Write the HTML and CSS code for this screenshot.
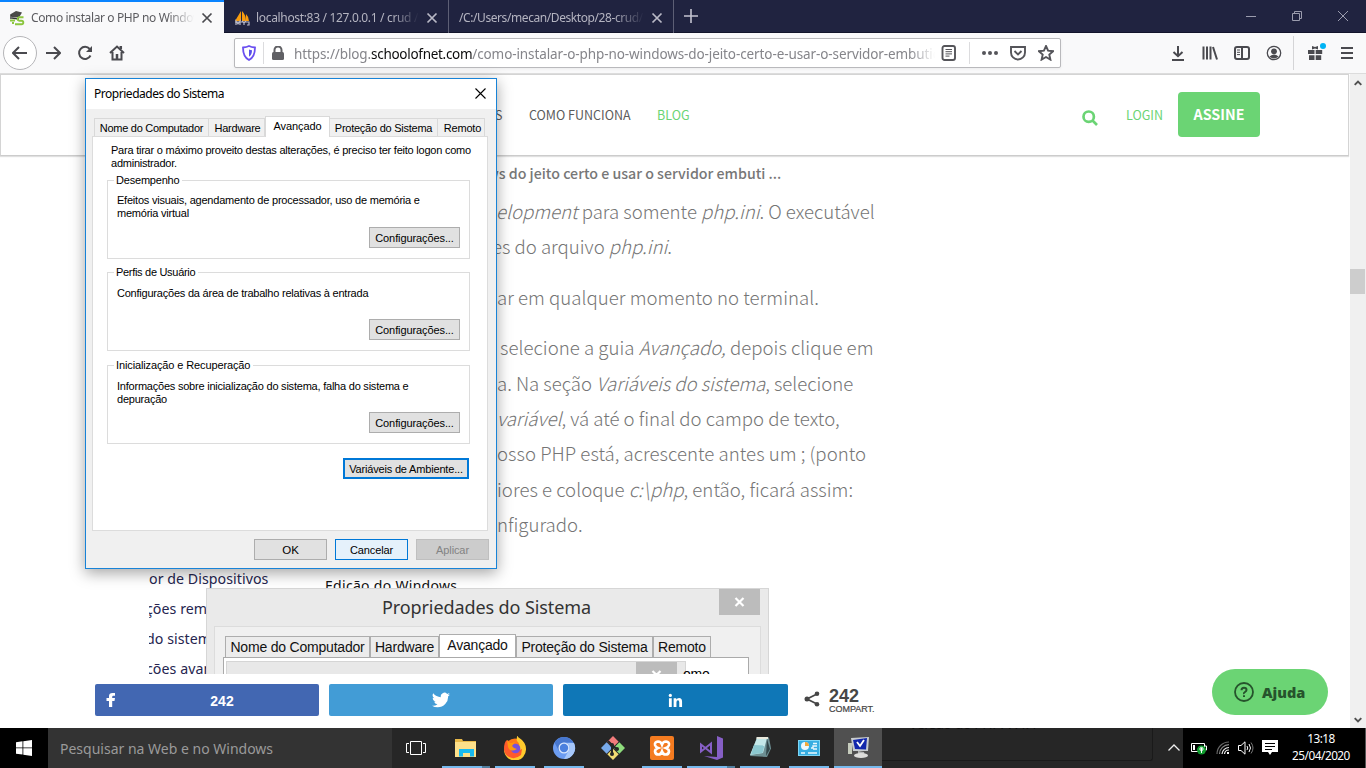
FILE: index.html
```html
<!DOCTYPE html>
<html lang="pt-BR">
<head>
<meta charset="utf-8">
<title>Como instalar o PHP no Windows</title>
<link rel="stylesheet" href="styles.css">
</head>
<body>
<div class="desktop">

<header class="tabs">
  <div class="tab tab-active">
    <svg class="fav" viewBox="0 0 16 16"><path d="M1 4.500 7 1l6 1.500-3 5-7-.5z" fill="#4a4a48"/><path d="M2 5v4M3 8l7 1" stroke="#333" stroke-width="1.400"/><path d="M14.500 7.200H10a1.800 1.800 0 0 0 0 3.500h2.500a1.800 1.800 0 0 1 0 3.600H6M1 10.500h5M3 13h2" fill="none" stroke="#8cc63f" stroke-width="1.900"/></svg>
    <span class="tab-text t1">Como instalar o PHP no Windows</span>
    <svg class="tab-x" viewBox="0 0 12 12"><path d="m1.500 1.500 9 9m0-9-9 9"/></svg>
  </div>
  <div class="tab">
    <svg class="fav" viewBox="0 0 16 16"><path d="M1 11 7 1v10zM8 11V1q4 4 4 10zM12 11V4q3 3 3 7z" fill="#f89c0e"/><path d="M1 12h14M2 15v-4l2 3 2-3v4m2-4 2 2 2-2m-2 2v2m3 0h2v-3h-2" fill="none" stroke="#b9b9c9" stroke-width="1.200"/></svg>
    <span class="tab-text t2">localhost:83 / 127.0.0.1 / crud / c</span>
    <svg class="tab-x" viewBox="0 0 12 12"><path d="m1.500 1.500 9 9m0-9-9 9"/></svg>
  </div>
  <div class="tab tab3">
    <span class="tab-text t3">/C:/Users/mecan/Desktop/28-crud/i</span>
    <svg class="tab-x" viewBox="0 0 12 12"><path d="m1.500 1.500 9 9m0-9-9 9"/></svg>
  </div>
  <svg class="newtab" viewBox="0 0 14 14"><path d="M7 0v14M0 7h14"/></svg>
  <div class="winctl">
    <svg viewBox="0 0 10 10"><path d="M0 5.500h10"/></svg>
    <svg viewBox="0 0 10 10"><path d="M.5 2.500h7v7h-7zM2.500 2.500v-2h7v7h-2"/></svg>
    <svg viewBox="0 0 10 10"><path d="m0 0 10 10M10 0 0 10"/></svg>
  </div>
</header>

<nav class="toolbar">
  <span class="back"><svg viewBox="0 0 16 16"><path d="M15 8H1m6-6L1 8l6 6"/></svg></span>
  <svg class="ti fwd" viewBox="0 0 16 16"><path d="M1 8h14M9 2l6 6-6 6"/></svg>
  <svg class="ti rel" viewBox="0 0 16 16"><path d="M13.500 10.500A6 6 0 1 1 12.700 4"/><path d="M15 1v6H9z" fill="#4a4a4f" stroke="none"/></svg>
  <svg class="ti home" viewBox="0 0 16 16"><path d="m1 8 7-6.500L15 8M3.500 7v7.500h9V7"/><path d="M8 9v5M11.800 1v3" stroke-width="2.500"/></svg>
  <div class="urlbar">
    <svg class="shield" viewBox="0 0 14 16"><path d="M7 1c2 1 4 1.300 6 1.500 0 6-1 10-6 12.500C2 12.500 1 8.500 1 2.500 3 2.300 5 2 7 1z" fill="#fff" stroke="#6a4ff0" stroke-width="1.800"/><path d="M7 4.500c1 .4 2 .6 3 .7 0 3-.7 5-3 6.500z" fill="#5a50ea"/></svg>
    <span class="usep"></span>
    <svg class="lock" viewBox="0 0 12 14"><rect x="0" y="6" width="12" height="8" rx="1.500" fill="#606064"/><path d="M2.500 7V4a3.500 3.500 0 0 1 7 0v3" fill="none" stroke="#606064" stroke-width="2"/></svg>
    <span class="url">https://blog.<b>schoolofnet.com</b>/como-instalar-o-php-no-windows-do-jeito-certo-e-usar-o-servidor-embutido</span>
    <svg class="ui reader" viewBox="0 0 16 16"><rect x="1.500" y="1" width="12.500" height="14" rx="2"/><path d="M4.500 4.500h6.500M4.500 6.700h6.500M4.500 8.900h6.500M4.500 11.100h4" stroke-width="1"/></svg>
    <span class="usep usep2"></span>
    <svg class="ui dots" viewBox="0 0 16 16"><g fill="#55555a" stroke="none"><circle cx="2" cy="8" r="2"/><circle cx="8" cy="8" r="2"/><circle cx="14" cy="8" r="2"/></g></svg>
    <svg class="ui pocket" viewBox="0 0 16 16"><path d="M1 2h14v5.500a7 7 0 0 1-14 0z"/><path d="M4.500 6 8 9.500 11.500 6"/></svg>
    <svg class="ui star" viewBox="0 0 16 16"><path d="m8 1 2.100 4.700 5 .5-3.800 3.400 1.100 5L8 12l-4.400 2.600 1.100-5L.9 6.200l5-.5z"/></svg>
  </div>
  <svg class="ti dl" viewBox="0 0 16 16"><path d="M8 1v10M3.500 7 8 11.200 12.500 7M2 15h12"/></svg>
  <svg class="ti lib" viewBox="0 0 16 16"><path d="M1.500 1.500v13M5 1.500v13M8.500 1.500v13M11 2l4 12.500"/></svg>
  <svg class="ti side" viewBox="0 0 16 16"><rect x="1" y="2" width="14" height="12" rx="2"/><path d="M8 2v12"/><path d="M3 5h3M3 7.300h3M3 9.600h3" stroke-width="1"/></svg>
  <svg class="ti acc" viewBox="0 0 16 16"><circle cx="8" cy="8" r="6.700" stroke-width="1.300"/><circle cx="8" cy="6.300" r="2.900" fill="#4a4a4f" stroke="none"/><path d="M3.500 11.500Q8 7.500 12.500 11.500 8 15.500 3.500 11.500z" fill="#4a4a4f" stroke="none"/></svg>
  <span class="tsep"></span>
  <svg class="gift" viewBox="0 0 20 18"><path d="M1 7h6.500v4H1zM8.700 7h6.500v4H8.700zM2 12.200h5.500V17H2zM8.700 12.200h5.500V17H8.700zM5 3l3 1L11 3v3.500L8 5.500 5 6.500z" fill="#4a4a4f"/><circle cx="16" cy="3" r="3" fill="#00b3f4"/></svg>
  <svg class="ti menu" viewBox="0 0 16 16"><path d="M2 3h12M2 8h12M2 13h12"/></svg>
</nav>

<main class="view">
  <div class="page">
    <header class="site">
      <span class="nav n0">S</span>
      <span class="nav n1">COMO FUNCIONA</span>
      <span class="nav n2">BLOG</span>
      <svg class="search" viewBox="0 0 16 16"><circle cx="6.700" cy="6.700" r="5.200"/><path d="m10.500 10.500 4.500 4.500"/></svg>
      <span class="nav n3">LOGIN</span>
      <span class="assine">ASSINE</span>
    </header>
    <p class="crumb">ws do jeito certo e usar o servidor embuti ...</p>
    <article class="post">
      <p><span class="l1"><i>elopment</i> para somente <i>php.ini</i>. O executável</span><span class="l2">es do arquivo <i>php.ini</i>.</span></p>
      <p><span class="l3">ar em qualquer momento no terminal.</span></p>
      <p><span class="l4">selecione a guia <i>Avançado,</i> depois clique em</span><span class="l5">a. Na seção <i>Variáveis do sistema</i>, selecione</span><span class="l6"><i>variável</i>, vá até o final do campo de texto,</span><span class="l7">osso PHP está, acrescente antes um ; (ponto</span><span class="l8">iores e coloque <i>c:\php</i>, então, ficará assim:</span><span class="l9">nfigurado.</span></p>
    </article>
    <figure class="figure">
      <div class="links"><span>or de Dispositivos</span><span>ções remotas</span><span>do sistema</span><span>ções avançadas</span></div>
      <span class="edition">Edição do Windows</span>
      <div class="oldwin">
        <div class="oldtitle"><span>Propriedades do Sistema</span><svg viewBox="0 0 41 26"><rect width="41" height="26" fill="#bcbcbc"/><path d="m16.500 9 8 8m0-8-8 8" stroke="#fff" stroke-width="2.200"/></svg></div>
        <div class="oldbody">
          <div class="oldtabs"><span class="o1">Nome do Computador</span><span class="o2">Hardware</span><span class="o3">Avançado</span><span class="o4">Proteção do Sistema</span><span class="o5">Remoto</span></div>
          <div class="oldpane"><div class="inner"><svg viewBox="0 0 41 26"><rect width="41" height="26" fill="#bcbcbc"/><path d="m16.500 9 8 8m0-8-8 8" stroke="#fff" stroke-width="2.200"/></svg></div><span class="omo">omo</span></div>
        </div>
      </div>
    </figure>
    <div class="share">
      <span class="sb fb"><svg viewBox="0 0 10 16"><path d="M3 15V9H.5V6H3V4Q3 1 6.500 1H9v2.800H7.300Q6.200 3.800 6.200 5v1H9l-.5 3H6.200v6z" fill="#fff"/></svg><b>242</b></span>
      <span class="sb tw"><svg viewBox="0 0 24 24"><path fill="#fff" d="M24 4.600a10 10 0 0 1-2.800.8 5 5 0 0 0 2.100-2.700 10 10 0 0 1-3.100 1.200 4.900 4.900 0 0 0-8.400 4.500A14 14 0 0 1 1.700 3.100a4.900 4.900 0 0 0 1.500 6.600 5 5 0 0 1-2.200-.6 4.900 4.900 0 0 0 3.900 4.900 5 5 0 0 1-2.200.1 4.900 4.900 0 0 0 4.600 3.400A10 10 0 0 1 0 19.500 14 14 0 0 0 7.500 21.700 13.900 13.900 0 0 0 21.500 7.100 10 10 0 0 0 24 4.600z"/></svg></span>
      <span class="sb li"><svg viewBox="0 0 16 16"><path fill="#fff" d="M1 5.500h3V15H1zM6 5.500h2.800v1.300q1-1.600 3-1.600 3.200 0 3.200 4V15h-3V9.800q0-2-1.400-2Q9 7.800 9 10v5H6z"/><circle cx="2.500" cy="2.600" r="1.700" fill="#fff"/></svg></span>
      <svg class="shicon" viewBox="0 0 16 16"><path d="M13 3 3 8l10 5" fill="none" stroke="#464646" stroke-width="1.800"/><g fill="#464646"><circle cx="13" cy="2.800" r="2.300"/><circle cx="3" cy="8" r="2.500"/><circle cx="13" cy="13.200" r="2.300"/></g></svg>
      <span class="count"><b>242</b><small>COMPART.</small></span>
    </div>
    <div class="help"><svg viewBox="0 0 20 20"><circle cx="10" cy="10" r="9"/><path d="M7.500 8.200Q7.500 5.700 10 5.700t2.500 2.200Q12.500 9 11 10t-1 2" stroke-width="2"/><path d="M10 13.200v1.800" stroke-width="2"/></svg><b>Ajuda</b></div>
  </div>
  <div class="scroll">
    <svg viewBox="0 0 8 6"><path d="m.7 4.800 3.300-3.300 3.300 3.300"/></svg>
    <span class="thumb"></span>
    <svg viewBox="0 0 8 6"><path d="m.7 1.200 3.300 3.300 3.300-3.300"/></svg>
  </div>
</main>

<footer class="taskbar">
  <span class="start"><svg viewBox="0 0 16 16"><path d="M0 2.200 6.500 1.300v6.200H0zM7.300 1.200 16 0v7.500H7.300zM0 8.300h6.500v6.300L0 13.700zM7.300 8.300H16V16l-8.700-1.200z" fill="#fff"/></svg></span>
  <span class="sbox">Pesquisar na Web e no Windows</span>
  <span class="taskview"><svg viewBox="0 0 20 14"><path d="M4.500.5h11v13h-11zM3 2.500H.5v9H3M17 2.500h2.500v9H17" fill="none" stroke="#fff"/></svg></span>
  <div class="apps">
    <span class="app run multi"><svg viewBox="0 0 24 24"><path d="M1 4V3h7l1 2h13v16H1z" fill="#e9b949"/><path d="M1 6h21v15H1z" fill="#fde08a"/><path d="M5 20.500V13h15v7.500h-4V17H9v3.500z" fill="#18baf0"/></svg></span>
    <span class="app run"><svg viewBox="0 0 24 24"><circle cx="12" cy="13" r="10.500" fill="#ff7a1c"/><path d="M15 1q8 5 8 12a11 11 0 0 1-22 1q7 5 14-1 3-5-1-8-1-3 1-6z" fill="#ffca2d"/><path d="M1 13Q1 6 4 4l3 3 3-1-2 5 4 5 7-3-1 6q-6 5-12 2-5-3-5-8z" fill="#ff5a2b"/><circle cx="12.500" cy="12.500" r="4.800" fill="#7851dc"/><path d="m4 4 3 3 5-1-3 4q2 3 5 3-7 4-9-2z" fill="#ff980e"/></svg></span>
    <span class="app run"><svg viewBox="0 0 24 24"><circle cx="12" cy="12" r="11" fill="#6c9cf1"/><path d="M2.500 6.500A11 11 0 0 1 21.500 6.500H12a5.500 5.500 0 0 0-5 3.500L7 15z" fill="#4777cf"/><path d="M22 7a11 11 0 0 1-10 16l5-9q2-4-2-7z" fill="#a6c7fa"/><circle cx="12" cy="12" r="5.500" fill="#d9e6fb"/><circle cx="12" cy="12" r="4.200" fill="#4b80df"/></svg></span>
    <span class="app"><svg viewBox="0 0 24 24"><g transform="rotate(45 12 12)"><path d="M3.500 3.500h8v8h-8z" fill="#f27c7c"/><path d="M12.500 3.500h8v8h-8z" fill="#8edc7c"/><path d="M3.500 12.500h8v8h-8z" fill="#78a9ea"/><path d="M12.500 12.500h8v8h-8z" fill="#f2dc72"/></g><path d="m7 5 7 7M11 8v11M11 9l6 5" stroke="#262626" stroke-width="2"/><g fill="#262626"><circle cx="11" cy="9" r="2"/><circle cx="11" cy="18" r="2"/><circle cx="16" cy="13" r="2"/></g></svg></span>
    <span class="app run"><svg viewBox="0 0 24 24"><rect width="24" height="24" rx="2" fill="#f47b20"/><path d="M12 8.500Q11 5.500 8 5.500 4.500 6 5 9q.5 2 3 3-3 1-3 3.500.3 3 3.500 3 2.500 0 3.500-3 1 3 3.500 3 3.200 0 3.500-3Q19 13 16 12q2.500-1 3-3 .5-3-3-3.500-3 0-4 3z" fill="none" stroke="#fff" stroke-width="2.600"/></svg></span>
    <span class="app run multi"><svg viewBox="0 0 24 24"><path d="m18 0 6 2.500v19L18 24 5 20l13 1z" fill="#865fc5"/><path d="M2 8.500v7l10-8v9z" fill="none" stroke="#865fc5" stroke-width="2"/></svg></span>
    <span class="app run"><svg viewBox="0 0 24 24"><path d="M9 1.500h12l2 11-4 8.500L2 20z" fill="#6d8f93"/><path d="M9 2h10l-4 15L2 19z" fill="#c4e8e9"/><path d="m6 9 10.500.5-2 7.500L3 18.500z" fill="#8cc8d0"/><path d="m19 3 3 10-4 7z" fill="#33474b"/><path d="M8.500 2H20" stroke="#e9e9dc" stroke-width="2"/></svg></span>
    <span class="app run"><svg viewBox="0 0 24 24"><path d="M1 4h22v16H1z" fill="#7bd5f5"/><path d="M2 5h20v14H2z" fill="#37ade1"/><circle cx="8" cy="10" r="4" fill="#eef8fc"/><path d="M8 10V6a4 4 0 0 1 4 4z" fill="#f1a93b"/><path d="M14 12h2v-2h4M4 17h4m3 0h9M16 7.500h4m-4 5.500h4" stroke="#e9f7fd" stroke-width="1.400" fill="none"/></svg></span>
    <span class="app run current"><svg viewBox="0 0 24 24"><path d="m5 2 18-1-1 14L7 15z" fill="#c8ccd0"/><path d="m7 4 14-2-1 11.500L9 13z" fill="#1227ac"/><path d="m11 6 3 4 4-6" fill="none" stroke="#fff" stroke-width="1.800"/><path d="m12 15 6 1 1 4-7 1z" fill="#b6b8b8"/><ellipse cx="15" cy="19.500" rx="7" ry="2.500" fill="#dddddb"/><path d="M2 7h4v11H2z" fill="#c5cbbc"/></svg></span>
  </div>
  <div class="ghost"><span>Versão do PHP: 7.4.4</span></div>
  <svg class="chev" viewBox="0 0 12 7"><path d="m.5 6.500 5.500-5.500 5.500 5.500"/></svg>
  <div class="tray">
    <svg class="bat" viewBox="0 0 16 14"><path d="M.5 2.500h13v8H.5zM14 5h1.500v4H14" fill="none" stroke="#fff"/><path d="M2 4h2v5H2z" fill="#fff"/><circle cx="10.500" cy="9" r="4.500" fill="#109c2e"/><path d="M10.500 7v5" stroke="#fff"/><circle cx="10.500" cy="8" r="1.600" fill="none" stroke="#fff"/></svg>
    <svg class="wifi" viewBox="0 0 14 14"><g fill="none" stroke-width="1.200"><path d="M1 13A12 12 0 0 1 13 1" stroke="#666"/><path d="M3.500 13A9.500 9.500 0 0 1 13 3.700" stroke="#888"/><path d="M6 13a7 7 0 0 1 7-6.500M8.500 13A4.500 4.500 0 0 1 13 9" stroke="#eee"/></g><path d="M11 11h2v2h-2z" fill="#fff"/></svg>
    <svg class="vol" viewBox="0 0 16 14"><path d="M.5 4.500H3l4-3.700v12.400L3 9.500H.5zM9 5q1.500 2 0 4M11 3q3 4 0 8" fill="none" stroke="#fff"/><path d="M13 1.500q4 5.500 0 11" fill="none" stroke="#777"/></svg>
    <svg class="note" viewBox="0 0 16 16"><path d="M0 0h16v12h-6l-2 3-2-3H0z" fill="#fff"/><path d="M3 3.500h10M3 6.500h10M3 9.500h7" stroke="#000"/></svg>
    <span class="clock"><span class="hh">13:18</span><span class="dd">25/04/2020</span></span>
  </div>
</footer>

<section class="dialog">
  <div class="dtitle"><span>Propriedades do Sistema</span><svg viewBox="0 0 11 11"><path d="m.5.5 10 10m0-10-10 10"/></svg></div>
  <div class="dtabs"><span class="d1">Nome do Computador</span><span class="d2">Hardware</span><span class="d3">Avançado</span><span class="d4">Proteção do Sistema</span><span class="d5">Remoto</span></div>
  <div class="dpane">
    <p class="intro"><span>Para tirar o máximo proveito destas alterações, é preciso ter feito logon como</span><br>administrador.</p>
    <fieldset class="f1"><legend>Desempenho</legend><p>Efeitos visuais, agendamento de processador, uso de memória e<br>memória virtual</p><span class="btn cfg">Configurações...</span></fieldset>
    <fieldset class="f2"><legend>Perfis de Usuário</legend><p>Configurações da área de trabalho relativas à entrada</p><span class="btn cfg">Configurações...</span></fieldset>
    <fieldset class="f3"><legend>Inicialização e Recuperação</legend><p>Informações sobre inicialização do sistema, falha do sistema e<br>depuração</p><span class="btn cfg">Configurações...</span></fieldset>
    <span class="btn env">Variáveis de Ambiente...</span>
  </div>
  <div class="dfoot"><span class="btn ok">OK</span><span class="btn cancel">Cancelar</span><span class="btn apply">Aplicar</span></div>
</section>

</div>
</body>
</html>
```
FILE: styles.css
```css
* { box-sizing: border-box; }
body { margin: 0; overflow: hidden; font-family: "Noto Sans", sans-serif; }
p, figure, fieldset { margin: 0; padding: 0; }
svg { display: block; flex: none; }
.desktop { position: relative; width: 1366px; height: 768px; background: #fff; display: flex; flex-direction: column; overflow: hidden; }

/* browser tabs */
.tabs { height: 33px; flex: none; background: #202340; display: flex; align-items: center; border-bottom: 1px solid #12142b; }
.tab { width: 225px; height: 33px; display: flex; align-items: center; padding: 3px 10px 0 10px; color: #b4b4c0; border-right: 1px solid #5d5f75; }
.tab-active { width: 224px; background: #f9f9fa; border: 0; border-top: 2px solid #0a84ff; color: #5c5c60; padding: 1px 11px 0 9px; }
.fav { width: 16px; height: 16px; margin-right: 6px; }
.tab-text { flex: 1; height: 20px; line-height: 20px; font-size: 12px; white-space: nowrap; overflow: hidden; -webkit-mask-image: linear-gradient(90deg, #000 84%, transparent 100%); mask-image: linear-gradient(90deg, #000 84%, transparent 100%); margin-right: 7px; }
.t1 { letter-spacing: -.38px; }
.t2 { letter-spacing: -.33px; }
.t3 { letter-spacing: -.42px; }
.tab-x { width: 12px; height: 12px; fill: none; stroke: #b9b9c6; stroke-width: 1.7; }
.tab-active .tab-x { stroke: #4a4a4f; }
.newtab { width: 14px; height: 14px; margin-left: 10px; stroke: #c4c4d0; stroke-width: 1.6; }
.winctl { margin-left: auto; display: flex; gap: 36px; margin-right: 18px; }
.winctl svg { width: 10px; height: 10px; fill: none; stroke: #9b9cae; stroke-width: 1; }

/* toolbar */
.toolbar { height: 41px; flex: none; background: #f9f9fa; border-bottom: 1px solid #dcdcdc; display: flex; align-items: center; padding-left: 3px; }
.back { width: 34px; height: 34px; border: 1px solid #b5b5b8; border-radius: 50%; background: #fff; display: grid; place-items: center; }
.back svg, .ti { width: 16px; height: 16px; fill: none; stroke: #4a4a4f; stroke-width: 2; }
.fwd { margin-left: 8px; }
.rel { margin-left: 16px; }
.home { margin-left: 16px; }
.urlbar { width: 827px; height: 30px; margin-left: 109px; border: 1px solid #b9b9bc; border-radius: 2px; background: #fff; display: flex; align-items: center; box-shadow: 0 1px 3px rgba(0,0,0,.06); }
.shield { width: 14px; height: 16px; margin-left: 7px; }
.usep { width: 1px; height: 22px; background: #dcdcde; margin-left: 7px; }
.lock { width: 12px; height: 14px; margin-left: 8px; }
.url { width: 641px; margin-left: 10px; font-size: 13.500px; line-height: 22px; padding-top: 1px; color: #85858a; white-space: nowrap; overflow: hidden; letter-spacing: -.1px; -webkit-mask-image: linear-gradient(90deg, #000 96%, transparent); mask-image: linear-gradient(90deg, #000 96%, transparent); }
.url b { font-weight: 400; color: #0c0c0d; letter-spacing: -.3px; }
.ui { width: 16px; height: 16px; fill: none; stroke: #55555a; stroke-width: 1.900; }
.reader { margin-left: 6px; }
.usep2 { margin-left: 12px; }
.dots { margin-left: 12px; }
.pocket { margin-left: 12px; }
.star { margin-left: 12px; }
.dl { margin-left: 109px; }
.lib, .side, .acc { margin-left: 16px; }
.tsep { width: 1px; height: 34px; background: #d5d5d7; margin-left: 11px; }
.gift { width: 20px; height: 18px; margin: -2px 0 0 13px; }
.menu { margin-left: 12px; }

/* page */
.view { height: 654px; flex: none; display: flex; }
.page { width: 1350px; height: 654px; overflow: hidden; position: relative; }
.site { width: 1349px; height: 82px; border: 1px solid #d4d4d4; border-bottom-color: #ccc; box-shadow: 0 1px 1px rgba(0,0,0,.12); display: flex; align-items: center; padding-left: 494px; font-family: "Noto Sans CJK SC", sans-serif; }
.nav { font-size: 12.500px; line-height: 20px; color: #5b5b5b; white-space: nowrap; }
.n0 { width: 9px; }
.n1 { width: 103px; margin-left: 25px; }
.n2 { width: 33px; margin-left: 25px; color: #6bd474; }
.n3 { margin-left: 28px; color: #6bd474; width: 37px; }
.search { width: 16px; height: 16px; margin: 5px 0 0 392px; fill: none; stroke: #6bd474; stroke-width: 2.700; }
.assine { width: 82px; height: 45px; line-height: 44px; margin: -2px 0 0 15px; border-radius: 4px; background: #6bd474; color: #fff; font-weight: 700; font-size: 14.300px; text-align: center; }
.crumb { margin: 6px 0 0 487px; height: 23px; line-height: 22px; font-family: "Noto Sans CJK SC", sans-serif; font-weight: 500; font-size: 14.200px; color: #777; white-space: nowrap; }
.post { height: 387px; padding: 8px 0 0 497px; font-family: "Noto Sans CJK SC", sans-serif; font-weight: 300; font-size: 18.600px; color: #757575; white-space: nowrap; }
.post p { margin-bottom: 15px; }
.post span { display: block; line-height: 35.400px; height: 35.400px; }
.l1 { margin-left: -1px; }
.l2 { margin-left: -5px; }
.l3, .l7, .l8 { letter-spacing: .03px; }
.l4 { padding-left: 3px; letter-spacing: .04px; }
.figure { position: relative; width: 620px; height: 104px; margin-left: 149px; overflow: hidden; margin-top: -2px; }
.links { display: flex; flex-direction: column; margin-top: -6px; font-size: 14.200px; color: #25254f; white-space: nowrap; }
.links span { flex: none; height: 30px; line-height: 30px; letter-spacing: .05px; }
.links span + span { margin-left: -3px; }
.edition { position: absolute; left: 176px; top: 6px; font-size: 14px; line-height: 20px; color: #111; letter-spacing: .3px; }
.oldwin { position: absolute; left: 57px; top: 18px; width: 563px; height: 200px; background: #eaeaea; border: 1px solid #d6d6d6; }
.oldtitle { height: 37px; display: flex; justify-content: flex-end; }
.oldtitle span { width: 337px; font-size: 18px; line-height: 37px; color: #333; letter-spacing: -.1px; white-space: nowrap; }
.oldtitle svg { width: 41px; height: 26px; margin-right: 8px; }
.oldbody { margin: 0 7px; height: 160px; border: 1px solid #dcdcdc; background: #f0f0f0; padding: 8px 10px 0 8px; }
.oldtabs { display: flex; align-items: flex-end; height: 22px; padding-left: 2px; font-family: "Liberation Sans", sans-serif; font-size: 14px; color: #111; letter-spacing: -.2px; }
.oldtabs span { height: 21px; line-height: 21px; border: 1px solid #adadad; border-bottom: 0; text-align: center; white-space: nowrap; background: #ececec; }
.oldtabs .o1 { width: 145px; } .oldtabs .o2 { width: 69px; } .oldtabs .o4 { width: 137px; } .oldtabs .o5 { width: 58px; }
.oldtabs .o3 { width: 77px; height: 23px; background: #fff; }
.oldpane { width: 526px; height: 100px; border: 1px solid #aaa; background: #fff; display: flex; padding: 3px 0 0 2px; font-family: "Liberation Sans", sans-serif; font-size: 14px; }
.inner { width: 460px; background: #e8e8e8; border: 1px solid #d5d5d5; display: flex; justify-content: flex-end; padding-right: 8px; }
.inner svg { width: 41px; height: 26px; }
.omo { line-height: 26px; margin-left: -3px; letter-spacing: -.2px; }
.share { height: 32px; margin: 10px 0 0 95px; display: flex; gap: 10px; align-items: center; }
.sb { height: 32px; width: 224px; border-radius: 2px; display: flex; align-items: center; justify-content: center; color: #fff; font: 700 14px "Liberation Sans", sans-serif; }
.fb { background: #4267b2; justify-content: flex-start; }
.fb svg { width: 10px; height: 16px; margin-left: 11px; }
.fb b { flex: 1; text-align: center; padding-left: 9px; padding-top: 2px; }
.tw { background: #429cd6; }
.tw svg { width: 18px; height: 18px; }
.li { width: 225px; background: #0f77b7; }
.li svg { width: 15px; height: 15px; }
.shicon { width: 16px; height: 16px; margin: -3px 0 0 6px; }
.count { font-family: "Liberation Sans", sans-serif; color: #464646; display: flex; flex-direction: column; margin: 1px 0 0 -1px; }
.count b { font-size: 18px; line-height: 16px; }
.count small { font-size: 9px; line-height: 10px; letter-spacing: -.02px; -webkit-text-stroke: .2px #464646; }
.help { position: absolute; left: 1212px; top: 595px; width: 116px; height: 46px; border-radius: 23px; background: #6bd474; display: flex; align-items: center; padding-left: 22px; color: #26532c; font: 700 14.500px "Open Sans", sans-serif; gap: 8px; }
.help svg { width: 20px; height: 20px; fill: none; stroke: #26532c; stroke-width: 1.800; }
.scroll { width: 16px; background: #f0f0f0; display: flex; flex-direction: column; align-items: center; padding: 6px 0 5px; }
.scroll svg { width: 8px; height: 6px; fill: none; stroke: #505050; stroke-width: 1.900; }
.thumb { width: 15px; height: 25px; background: #cdcdcd; margin: 183px 1px auto 0; }

/* taskbar */
.taskbar { height: 40px; flex: none; background: #262626; display: flex; color: #fff; }
.start { width: 48px; background: #000; display: grid; place-items: center; }
.start svg { width: 16px; height: 16px; }
.sbox { width: 344px; background: #333; color: #9a9a9a; font-size: 14px; line-height: 41px; padding-left: 12px; white-space: nowrap; }
.taskview { width: 48px; display: grid; place-items: center; }
.taskview svg { width: 20px; height: 14px; }
.apps { display: flex; gap: 1px; margin-left: 2px; }
.app { width: 48px; height: 40px; display: flex; flex-direction: column; align-items: center; padding-top: 8px; }
.app svg { width: 24px; height: 24px; }
.run::after { content: ""; width: 40px; height: 2px; background: #76b9ed; margin-top: 6px; }
.multi::after { border-right: 8px solid #527f9f; }
.current { background: #505050; }
.current::after { width: 48px; }
.ghost { width: 271px; height: 33px; border: solid #1a1a1a; border-width: 0 1px 1px 0; border-radius: 0 0 3px 0; overflow: hidden; color: #101010; font: 14px "Noto Sans", sans-serif; }
.ghost span { display: block; margin: -12px 0 0 27px; line-height: 16px; height: 16px; width: 130px; white-space: nowrap; letter-spacing: -.4px; }
.chev { width: 12px; height: 7px; margin: 16px 0 0 15px; fill: none; stroke: #eee; stroke-width: 1.300; }
.tray { width: 183px; margin-left: auto; background: #000; display: flex; align-items: center; padding-left: 8px; box-shadow: inset -5px 0 0 -4px #555; }
.bat { width: 16px; height: 14px; }
.wifi { width: 14px; height: 14px; margin-left: 9px; }
.vol { width: 16px; height: 14px; margin-left: 8px; }
.note { width: 16px; height: 16px; margin-left: 8px; }
.clock { width: 76px; margin: -2px 0 0 5px; display: flex; flex-direction: column; align-items: center; font-size: 11.800px; line-height: 17px; letter-spacing: -.5px; white-space: nowrap; }

/* dialog window */
.dialog { position: absolute; left: 85px; top: 78px; width: 412px; height: 491px; border: 1px solid #1883d7; background: #f0f0f0; box-shadow: 0 4px 14px rgba(0,0,0,.36); font-family: "Liberation Sans", sans-serif; font-size: 11px; letter-spacing: -.2px; color: #000; }
.dtitle { height: 30px; background: #fff; display: flex; justify-content: space-between; padding: 0 10px 0 8px; font: 12px/30px "Noto Sans", sans-serif; letter-spacing: -.47px; }
.dtitle svg { width: 11px; height: 11px; margin-top: 9px; stroke: #000; stroke-width: 1.100; }
.dtabs { height: 27px; padding-left: 8px; display: flex; align-items: flex-end; }
.dtabs span { height: 18px; line-height: 18px; border: 1px solid #d9d9d9; border-bottom: 0; border-left: 0; text-align: center; white-space: nowrap; }
.dtabs .d1 { width: 115px; border-left: 1px solid #d9d9d9; letter-spacing: -.27px; } .dtabs .d2 { width: 56px; padding-left: 2px; }
.dtabs .d3 { width: 65px; height: 21px; line-height: 19px; background: #fff; border-left: 1px solid #d9d9d9; margin-bottom: -1px; position: relative; letter-spacing: -.1px; }
.dtabs .d4 { width: 108px; letter-spacing: -.25px; } .dtabs .d5 { width: 47px; padding-left: 3px; }
.dpane { width: 396px; height: 395px; margin-left: 6px; border: 1px solid #dcdcdc; background: #fff; padding: 7px 17px 0 14px; line-height: 13px; }
.intro { margin-left: 4px; white-space: nowrap; height: 30px; letter-spacing: -.23px; }
fieldset { width: 363px; height: 85px; border: 1px solid #dcdcdc; margin-bottom: 7px; display: block; min-width: 0; }
.f2 { margin-bottom: 8px; }
legend { margin-left: 6px; padding: 0 3px 0 2px; line-height: 13px; }
.f2 legend { letter-spacing: -.3px; }
.f3 legend { letter-spacing: -.12px; }
fieldset p { margin: 7px 0 0 9px; height: 25px; white-space: nowrap; letter-spacing: -.22px; }
.f2 p, .f3 p { margin-top: 8px; height: 24px; }
.btn { height: 21px; border: 1px solid #adadad; background: #e1e1e1; display: block; text-align: center; line-height: 21px; white-space: nowrap; letter-spacing: -.1px; }
.cfg { width: 91px; margin: 8px 0 0 261px; }
.env { width: 126px; border: 2px solid #0078d7; margin: 14px 0 0 236px; line-height: 19px; letter-spacing: -.17px; }
.dfoot { display: flex; justify-content: flex-end; gap: 8px; padding: 8px 7px 0 0; }
.dfoot .btn { width: 73px; }
.dfoot .ok { font-size: 11.500px; }
.dfoot .cancel { border-color: #0078d7; background: #e5f1fb; }
.dfoot .apply { background: #ccc; border-color: #bfbfbf; color: #838383; }
```
